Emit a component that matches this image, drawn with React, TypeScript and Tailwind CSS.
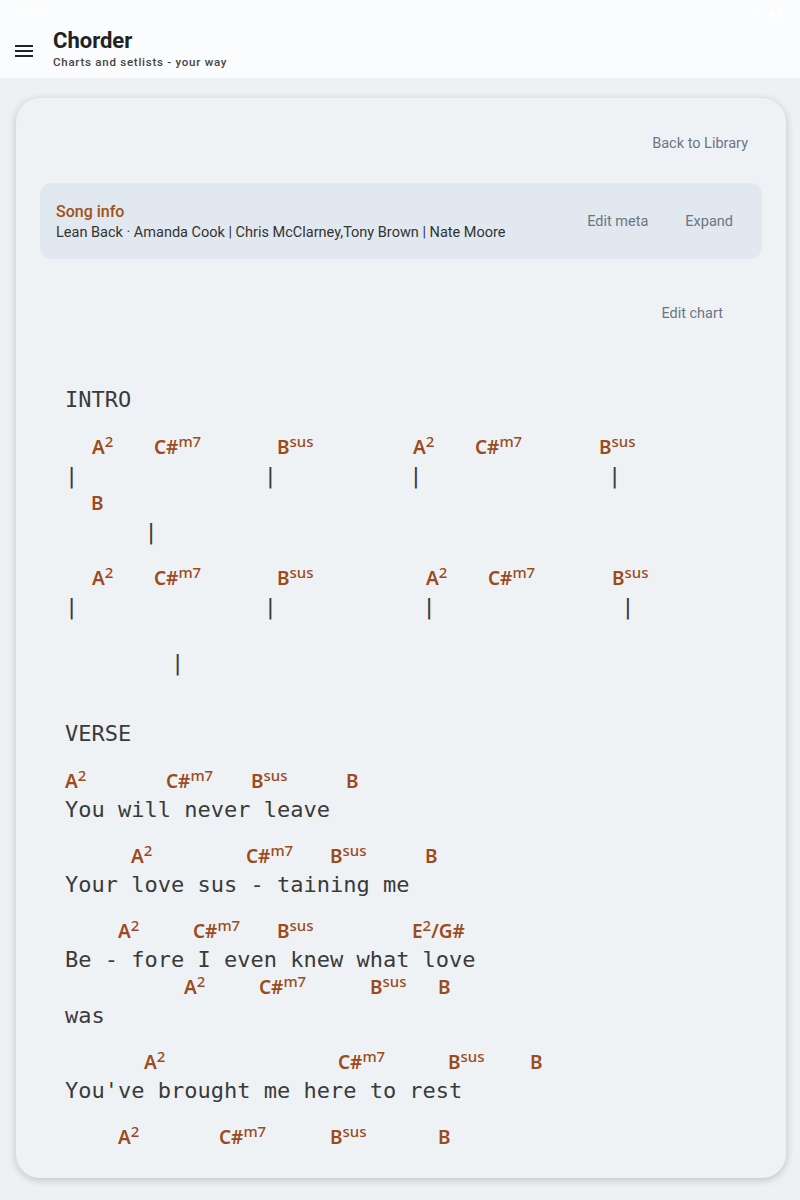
import React from 'react'

type Chord = { x: number; root: string; sup?: string; rest?: string }

type Row =
  | { kind: 'label'; text: string; mt: number }
  | { kind: 'chords'; chords: Chord[]; mt: number }
  | { kind: 'lyric'; text: string }

const LEFT = 65

const c = (x: number, root: string, sup?: string, rest?: string): Chord => ({ x, root, sup, rest })

const A2 = (x: number) => c(x, 'A', '2')
const Cm7 = (x: number) => c(x, 'C#', 'm7')
const Bsus = (x: number) => c(x, 'B', 'sus')
const B = (x: number) => c(x, 'B')

const bars = (cols: number[]) => {
  let s = ''
  cols.forEach((col) => {
    s = s.padEnd(col, ' ') + '|'
  })
  return s
}

const rows: Row[] = [
  { kind: 'label', text: 'INTRO', mt: 0 },
  { kind: 'chords', mt: 20, chords: [A2(92), Cm7(154), Bsus(277), A2(413), Cm7(475), Bsus(599)] },
  { kind: 'lyric', text: bars([0, 15, 26, 41]) },
  { kind: 'chords', mt: 0, chords: [B(91)] },
  { kind: 'lyric', text: bars([6]) },
  { kind: 'chords', mt: 19, chords: [A2(92), Cm7(154), Bsus(277), A2(426), Cm7(488), Bsus(612)] },
  { kind: 'lyric', text: bars([0, 15, 27, 42]) },
  { kind: 'chords', mt: 0, chords: [] },
  { kind: 'lyric', text: bars([8]) },
  { kind: 'label', text: 'VERSE', mt: 42 },
  { kind: 'chords', mt: 20, chords: [A2(65), Cm7(166), Bsus(251), B(346)] },
  { kind: 'lyric', text: 'You will never leave' },
  { kind: 'chords', mt: 19, chords: [A2(131), Cm7(246), Bsus(330), B(425)] },
  { kind: 'lyric', text: 'Your love sus - taining me' },
  { kind: 'chords', mt: 19, chords: [A2(118), Cm7(193), Bsus(277), c(412, 'E', '2', '/G#')] },
  { kind: 'lyric', text: 'Be - fore I even knew what love' },
  { kind: 'chords', mt: 0, chords: [A2(184), Cm7(259), Bsus(370), B(438)] },
  { kind: 'lyric', text: 'was' },
  { kind: 'chords', mt: 19, chords: [A2(144), Cm7(338), Bsus(448), B(530)] },
  { kind: 'lyric', text: "You've brought me here to rest" },
  { kind: 'chords', mt: 19, chords: [A2(118), Cm7(219), Bsus(330), B(438)] },
]

function ChordRow({ chords, mt }: { chords: Chord[]; mt: number }) {
  return (
    <div
      className="flex h-[27px] items-center whitespace-nowrap font-['Noto_Sans',sans-serif] text-[19px] font-semibold leading-[27px] text-[#9b4b1c]"
      style={{ marginTop: mt }}
    >
      {chords.map((ch, i) => {
        const next = chords[i + 1]
        return (
          <span
            key={i}
            className="shrink-0"
            style={{
              marginLeft: i === 0 ? ch.x - LEFT : 0,
              width: next ? next.x - ch.x : undefined,
            }}
          >
            {ch.root}
            {ch.sup && <sup className="text-[15px] font-medium">{ch.sup}</sup>}
            {ch.rest}
          </span>
        )
      })}
    </div>
  )
}

function Chart() {
  return (
    <div>
      {rows.map((r, i) => {
        if (r.kind === 'chords') return <ChordRow key={i} chords={r.chords} mt={r.mt} />
        return (
          <div
            key={i}
            className="h-[29px] whitespace-pre font-['DejaVu_Sans_Mono',monospace] text-[22px] leading-[29px] text-[#3a3a3a]"
            style={r.kind === 'label' ? { marginTop: r.mt } : undefined}
          >
            {r.text}
          </div>
        )
      })}
    </div>
  )
}

function MenuIcon() {
  return (
    <svg width="18" height="12" viewBox="0 0 18 12" fill="#222">
      <rect x="0" y="0" width="18" height="2" />
      <rect x="0" y="5" width="18" height="2" />
      <rect x="0" y="10" width="18" height="2" />
    </svg>
  )
}

export default function App() {
  return (
    <div className="h-[1200px] overflow-hidden bg-[#edf1f4] font-['Roboto',sans-serif]">
      <header className="h-[78px] bg-[#fbfcfd]">
        <div className="flex h-6 items-center justify-between px-4 text-[13px] text-white">
          <span>11:04</span>
          <span>▾ ◢ ▮</span>
        </div>
        <div className="flex items-start px-[15px] pt-[5px]">
          <div className="mt-4">
            <MenuIcon />
          </div>
          <div className="ml-5">
            <div className="text-[22px] font-bold leading-6 text-[#222]">Chorder</div>
            <div className="mt-0.5 text-[11.5px] font-medium leading-[14px] tracking-[0.75px] text-[#444]">
              Charts and setlists - your way
            </div>
          </div>
        </div>
      </header>

      <div className="ml-4 mr-[14px] mt-5 h-[1080px] overflow-hidden rounded-[24px] bg-[#eff2f5] px-6 pt-6 shadow-[0_2px_8px_rgba(0,0,0,0.2)]">
        <div className="flex h-11 items-center justify-end">
          <button className="px-3.5 text-[14.5px] text-[#6b7684]">Back to Library</button>
        </div>

        <div className="mt-[17px] flex items-center justify-between rounded-xl bg-[#e2e8ef] pb-[17px] pl-4 pr-[17px] pt-[19px]">
          <div>
            <div className="text-[16px] font-medium leading-5 text-[#a0521d]">Song info</div>
            <div className="mt-0.5 text-[14.5px] leading-[18px] text-[#333]">
              Lean Back · Amanda Cook | Chris McClarney,Tony Brown | Nate Moore
            </div>
          </div>
          <div className="flex items-center gap-[13px]">
            <button className="px-3 text-[14.5px] text-[#6b7684]">Edit meta</button>
            <button className="px-3 text-[14.5px] text-[#6b7684]">Expand</button>
          </div>
        </div>

        <div className="px-[25px] pt-[37px]">
          <div className="flex h-9 items-center justify-end">
            <button className="px-3.5 text-[14.5px] text-[#6b7684]">Edit chart</button>
          </div>
          <div className="mt-[53px]">
            <Chart />
          </div>
        </div>
      </div>
    </div>
  )
}
